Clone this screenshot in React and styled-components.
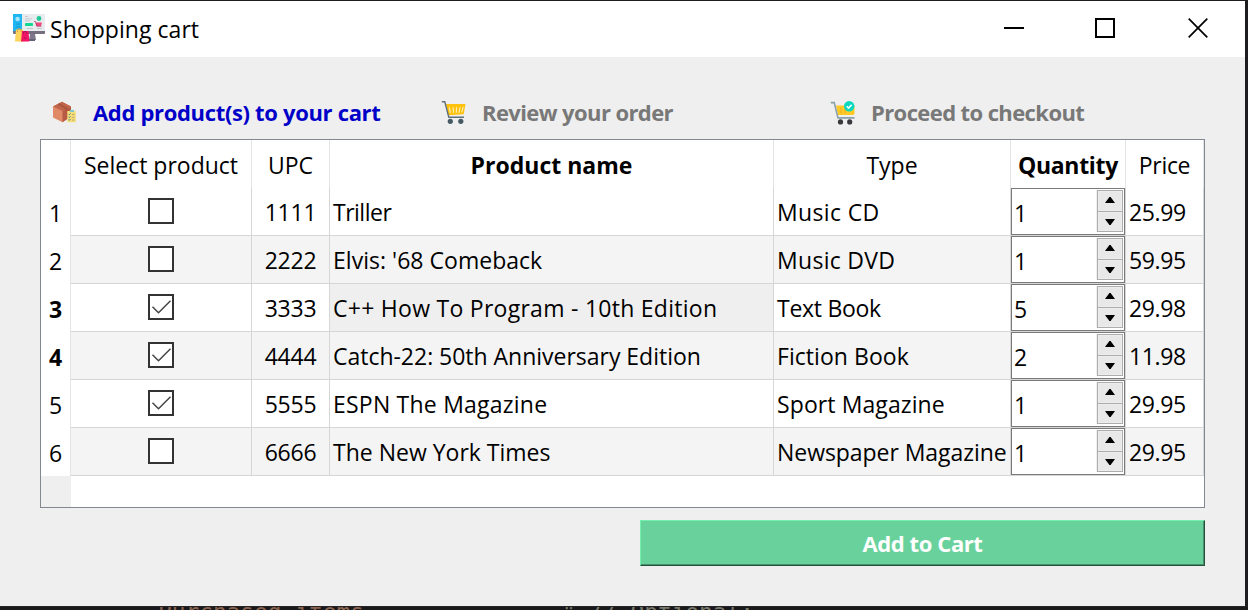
import React from "react";
import styled, { createGlobalStyle, css } from "styled-components";

const GlobalStyle = createGlobalStyle`
  *, *::before, *::after { box-sizing: border-box; }
  body { margin: 0; background: #1b1a1c; }
`;

const Desktop = styled.div`
  width: 1248px;
  height: 610px;
  padding-top: 1px;
  overflow: hidden;
  background: #1d1c1f;
  font-family: "Open Sans", "Noto Sans", sans-serif;
  font-size: 23px;
  color: #000;
`;

const Window = styled.main`
  display: flex;
  flex-direction: column;
  width: 1245px;
  height: 605px;
  background: #efefef;
`;

const TitleBar = styled.header`
  display: flex;
  align-items: center;
  height: 56px;
  padding: 0 37px 2px 13px;
  background: #fff;
`;

const Title = styled.h1`
  flex: 1;
  margin: 2px 0 0 5px;
  font-size: 23px;
  font-weight: 400;
  line-height: 32px;
  letter-spacing: 0.05px;
`;

const WindowControls = styled.div`
  display: flex;
  gap: 71px;
  svg { display: block; }
  svg:last-child { margin-left: 2px; }
`;

const Content = styled.div`
  display: flex;
  flex-direction: column;
  padding: 38px 40px 0;
`;

const Steps = styled.nav`
  display: grid;
  grid-template-columns: 389px 389px 1fr;
  height: 44px;
  padding-left: 11px;
`;

const Step = styled.div`
  display: flex;
  align-items: center;
  gap: 16px;
  height: 36px;
  color: ${(p) => (p.$active ? "#0000c8" : "#787878")};
  font-size: 22px;
  font-weight: 700;
  white-space: nowrap;
  letter-spacing: ${(p) => p.$spacing}px;
  svg { flex: none; display: block; }
`;

const StepLabel = styled.span`
  padding-bottom: 2px;
`;

const Table = styled.section`
  height: 369px;
  border: 1px solid #828790;
  background: linear-gradient(to right, #efefef 30px, #fff 30px);
`;

const Row = styled.div`
  display: grid;
  grid-template-columns: 30px 181px 78px 444px 237px 115px 78px;
  grid-template-rows: 48px;
  background: ${(p) => (p.$shaded ? "#f4f4f4" : "#fff")};
`;

const HeaderCell = styled.div`
  border-right: 1px solid #e4e4e4;
  text-align: center;
  line-height: 51px;
  white-space: nowrap;
  font-weight: ${(p) => (p.$bold ? 700 : 400)};
  letter-spacing: ${(p) => p.$spacing || 0}px;
`;

const RowNumber = styled.div`
  border-right: 1px solid #e4e4e4;
  background: #fff;
  text-align: center;
  line-height: 51px;
  font-weight: ${(p) => (p.$bold ? 700 : 400)};
`;

const Cell = styled.div`
  border-right: 1px solid #d6d6d6;
  border-bottom: 1px solid #d6d6d6;
  padding: 0 3px;
  line-height: 49px;
  white-space: nowrap;
  letter-spacing: ${(p) => p.$spacing || 0}px;
  ${(p) => p.$current && css`background: #efefef;`}
  ${(p) => p.$center && css`text-align: center;`}
  ${(p) => p.$flush && css`padding: 0;`}
`;

const CheckBox = styled.div`
  width: 26px;
  height: 26px;
  margin: 10px auto 0;
  border: 2px solid #333;
  background: #fff;
  svg { display: block; }
`;

const SpinBox = styled.div`
  display: flex;
  justify-content: space-between;
  width: 114px;
  height: 47px;
  padding: 1px 1px 1px 2px;
  border: 1px solid #7a7a7a;
  background: #fff;
`;

const SpinValue = styled.span`
  height: 43px;
  line-height: 47px;
`;

const SpinButtons = styled.div`
  display: flex;
  flex-direction: column;
  width: 26px;
  height: 42px;
  border: 1px solid #adadad;
  box-shadow: -1px 0 0 #f0f0f0;
  background: #e8e8e8;
`;

const SpinButton = styled.div`
  display: flex;
  height: 20px;
  padding-bottom: 2px;
  align-items: center;
  justify-content: center;
  box-shadow: inset 0 0 0 1px #ededed;
  & + & { padding: 1px 0 0; border-top: 1px solid #adadad; }
`;

const AddButton = styled.button`
  align-self: flex-end;
  width: 565px;
  height: 46px;
  margin-top: 12px;
  padding: 0;
  border: 1px solid;
  border-color: #73f0ae #26513c #26513c #73f0ae;
  box-shadow: inset -1px -1px 0 #479069;
  background: #69d29c;
  color: #fff;
  font: 700 22px "Open Sans", "Noto Sans", sans-serif;
  letter-spacing: -0.4px;
`;

const EditorStrip = styled.div`
  height: 4px;
  padding-left: 158px;
  overflow: hidden;
  background: #19181a;
  border-top: 1px solid #242326;
`;

const EditorLine = styled.div`
  display: flex;
  margin-top: -6px;
  color: #8a6350;
  font: 22.8px/23px "DejaVu Sans Mono", "Liberation Mono", monospace;
  white-space: pre;
`;

const EditorComment = styled.span`
  margin-left: 198px;
  color: #77786a;
`;

const ShopIcon = () => (
  <svg width="32" height="28" viewBox="0 0 32 28">
    <path d="M17 20h5l1 6h-7z" fill="#80788a" />
    <path d="M14 25h8v2h-8z" fill="#686075" />
    <rect width="32" height="20" rx="1" fill="#e9ecef" />
    <path d="M0 0h9v17H0z" fill="#20b6f2" />
    <path d="M0 17h32v2a1 1 0 0 1-1 1H1a1 1 0 0 1-1-1z" fill="#766e7e" />
    <circle cx="4.6" cy="5" r="2.3" fill="#a8e4fa" />
    <path d="M3 10h4M3 13h4" stroke="#1597ce" />
    <path d="M12 2.5h3M12 4.8h7M12 6.8h5M14 14.5h6M24 14.5h5" stroke="#c5c9ce" />
    <rect x="12" y="9" width="8" height="3" rx=".7" fill="#16d890" />
    <circle cx="26" cy="4.5" r="2.4" fill="#20c997" />
    <path d="M22.5 8.5H29l-1 3.5h-4.5z" fill="#f2477b" />
    <path d="M21 7.5h1.5l1.3 4.8h4.7" fill="none" stroke="#a63768" strokeWidth=".7" />
    <path d="M3 15.5h7l2 12H2z" fill="#ffd45b" />
    <path d="M4.5 18v-1.5a1.8 1.8 0 0 1 3.6 0V18" fill="none" stroke="#db9d43" />
    <path d="M9 17h6.5l.8 10.5H8z" fill="#f41467" />
    <path d="M10.5 20v-1a1.6 1.6 0 0 1 3.2 0v1M10.5 24h3" fill="none" stroke="#9f1953" />
  </svg>
);

const BoxIcon = () => (
  <svg width="26" height="24" viewBox="-1 0 26 24">
    <path d="M1 5.5 10 .7l9 4.8v9.8l-8.5 6L1 16.5z" fill="#e08a68" />
    <path d="M1 5.5 10 .7l9 4.8-8.5 4.6z" fill="#c0644a" />
    <path d="M10.5 10.1 19 5.5v10l-8.5 5.8z" fill="#b85b44" />
    <path d="m5.5 3.2 1.7-.9 8.4 4.9v2.3l-1.8 1V8.2z" fill="#a8553f" />
    <rect x="15.3" y="10" width="8.5" height="11.3" rx=".5" fill="#f7df78" />
    <path d="M18 8.9h4V11h-4z" fill="#80c8c9" />
    <path d="m16.5 13 .8.8 1.3-1.5m-2.1 3.5.8.8 1.3-1.5m-2.1 3.5.8.8 1.3-1.5" fill="none" stroke="#467a7c" strokeWidth=".9" />
    <path d="M20 13.5h2.5M20 16.3h2.5M20 19h2.5" stroke="#a7996d" strokeWidth=".8" />
  </svg>
);

const CartIcon = () => (
  <svg width="26" height="24" viewBox="-1 .7 26 24">
    <path d="M5 3.8h19.5L22.7 14 7.2 15z" fill="#ffc20e" />
    <path d="M8.3 7 9.4 12.5M12 7l.5 5.5M15.5 7l-.2 5.5M19 7l-1 5.5M22.2 6.5l-1.6 5.5" stroke="#fff0ba" strokeWidth="1.1" />
    <path d="M.8 1.5h3l4 15.4H23" fill="none" stroke="#61717a" strokeWidth="1.4" />
    <circle cx="9.3" cy="21" r="2.6" fill="#455a64" />
    <circle cx="19.8" cy="21" r="2.6" fill="#455a64" />
  </svg>
);

const CheckoutIcon = () => (
  <svg width="26" height="24" viewBox="-1 .4 26 24">
    <path d="M6 5h18.5v8l-1 1.5H8z" fill="#ffc928" />
    <path d="M11 7v6M15 8v5" stroke="#ecae20" />
    <path d="M.8 2h3.4L8 17.3h16.5" fill="none" stroke="#8ba0a8" strokeWidth="1.6" />
    <circle cx="10.5" cy="21.3" r="2.6" fill="#39383c" />
    <circle cx="19.7" cy="21.3" r="2.6" fill="#39383c" />
    <circle cx="19.2" cy="5.6" r="5.2" fill="#08d8bd" />
    <path d="m16.7 5.7 1.8 1.8 3.2-3.4" fill="none" stroke="#fff" strokeWidth="1.6" />
  </svg>
);

const CheckMark = () => (
  <svg width="22" height="22" viewBox="0 0 22 22">
    <path d="m2.5 10.7 6 6L20.5 4.8" fill="none" stroke="#444" strokeWidth="1.5" />
  </svg>
);

const Arrow = ({ down }) => (
  <svg width="10" height="6" viewBox="0 0 10 6">
    <path d={down ? "M0 0h10L5.6 6H4.4z" : "M0 6h10L5.6 0H4.4z"} />
  </svg>
);

const steps = [
  { label: "Add product(s) to your cart", Icon: BoxIcon, active: true, spacing: -0.33 },
  { label: "Review your order", Icon: CartIcon, spacing: -0.6 },
  { label: "Proceed to checkout", Icon: CheckoutIcon, spacing: -0.6 },
];

const columns = [
  { label: "Select product" },
  { label: "UPC" },
  { label: "Product name", bold: true },
  { label: "Type" },
  { label: "Quantity", bold: true, spacing: -0.3 },
  { label: "Price", spacing: -0.3 },
];

const products = [
  { upc: "1111", name: "Triller", nameSpacing: -0.5, type: "Music CD", typeSpacing: 0.35, quantity: 1, price: "25.99" },
  { upc: "2222", name: "Elvis: '68 Comeback", nameSpacing: 0.03, type: "Music DVD", typeSpacing: 0.3, quantity: 1, price: "59.95" },
  { upc: "3333", name: "C++ How To Program - 10th Edition", nameSpacing: 0.27, type: "Text Book", typeSpacing: -0.28, quantity: 5, price: "29.98", checked: true, bold: true, current: true },
  { upc: "4444", name: "Catch-22: 50th Anniversary Edition", nameSpacing: -0.02, type: "Fiction Book", typeSpacing: 0.05, quantity: 2, price: "11.98", checked: true, bold: true },
  { upc: "5555", name: "ESPN The Magazine", nameSpacing: 0.22, type: "Sport Magazine", typeSpacing: 0.1, quantity: 1, price: "29.95", checked: true },
  { upc: "6666", name: "The New York Times", type: "Newspaper Magazine", typeSpacing: -0.05, quantity: 1, price: "29.95" },
];

export default function App() {
  return (
    <Desktop>
      <GlobalStyle />
      <Window>
        <TitleBar>
          <ShopIcon />
          <Title>Shopping cart</Title>
          <WindowControls>
            <svg width="20" height="20"><path d="M0 10h20" stroke="#000" strokeWidth="2" /></svg>
            <svg width="20" height="20"><path d="M1 1h18v18H1z" fill="none" stroke="#000" strokeWidth="2" /></svg>
            <svg width="20" height="20"><path d="m.7.7 18.6 18.6M19.3.7.7 19.3" stroke="#000" strokeWidth="1.7" /></svg>
          </WindowControls>
        </TitleBar>
        <Content>
          <Steps>
            {steps.map(({ label, Icon, active, spacing }) => (
              <Step key={label} $active={active} $spacing={spacing}>
                <Icon />
                <StepLabel>{label}</StepLabel>
              </Step>
            ))}
          </Steps>
          <Table>
            <Row>
              <HeaderCell />
              {columns.map((c) => (
                <HeaderCell key={c.label} $bold={c.bold} $spacing={c.spacing}>{c.label}</HeaderCell>
              ))}
            </Row>
            {products.map((p, i) => (
              <Row key={p.upc} $shaded={i % 2 === 1}>
                <RowNumber $bold={p.bold}>{i + 1}</RowNumber>
                <Cell $flush><CheckBox>{p.checked && <CheckMark />}</CheckBox></Cell>
                <Cell $center $spacing={-0.25}>{p.upc}</Cell>
                <Cell $current={p.current} $spacing={p.nameSpacing}>{p.name}</Cell>
                <Cell $spacing={p.typeSpacing}>{p.type}</Cell>
                <Cell $flush>
                  <SpinBox>
                    <SpinValue>{p.quantity}</SpinValue>
                    <SpinButtons>
                      <SpinButton><Arrow /></SpinButton>
                      <SpinButton><Arrow down /></SpinButton>
                    </SpinButtons>
                  </SpinBox>
                </Cell>
                <Cell $spacing={-0.35}>{p.price}</Cell>
              </Row>
            ))}
          </Table>
          <AddButton>Add to Cart</AddButton>
        </Content>
      </Window>
      <EditorStrip>
        <EditorLine>Purchased items<EditorComment>" // Optional:</EditorComment></EditorLine>
      </EditorStrip>
    </Desktop>
  );
}
